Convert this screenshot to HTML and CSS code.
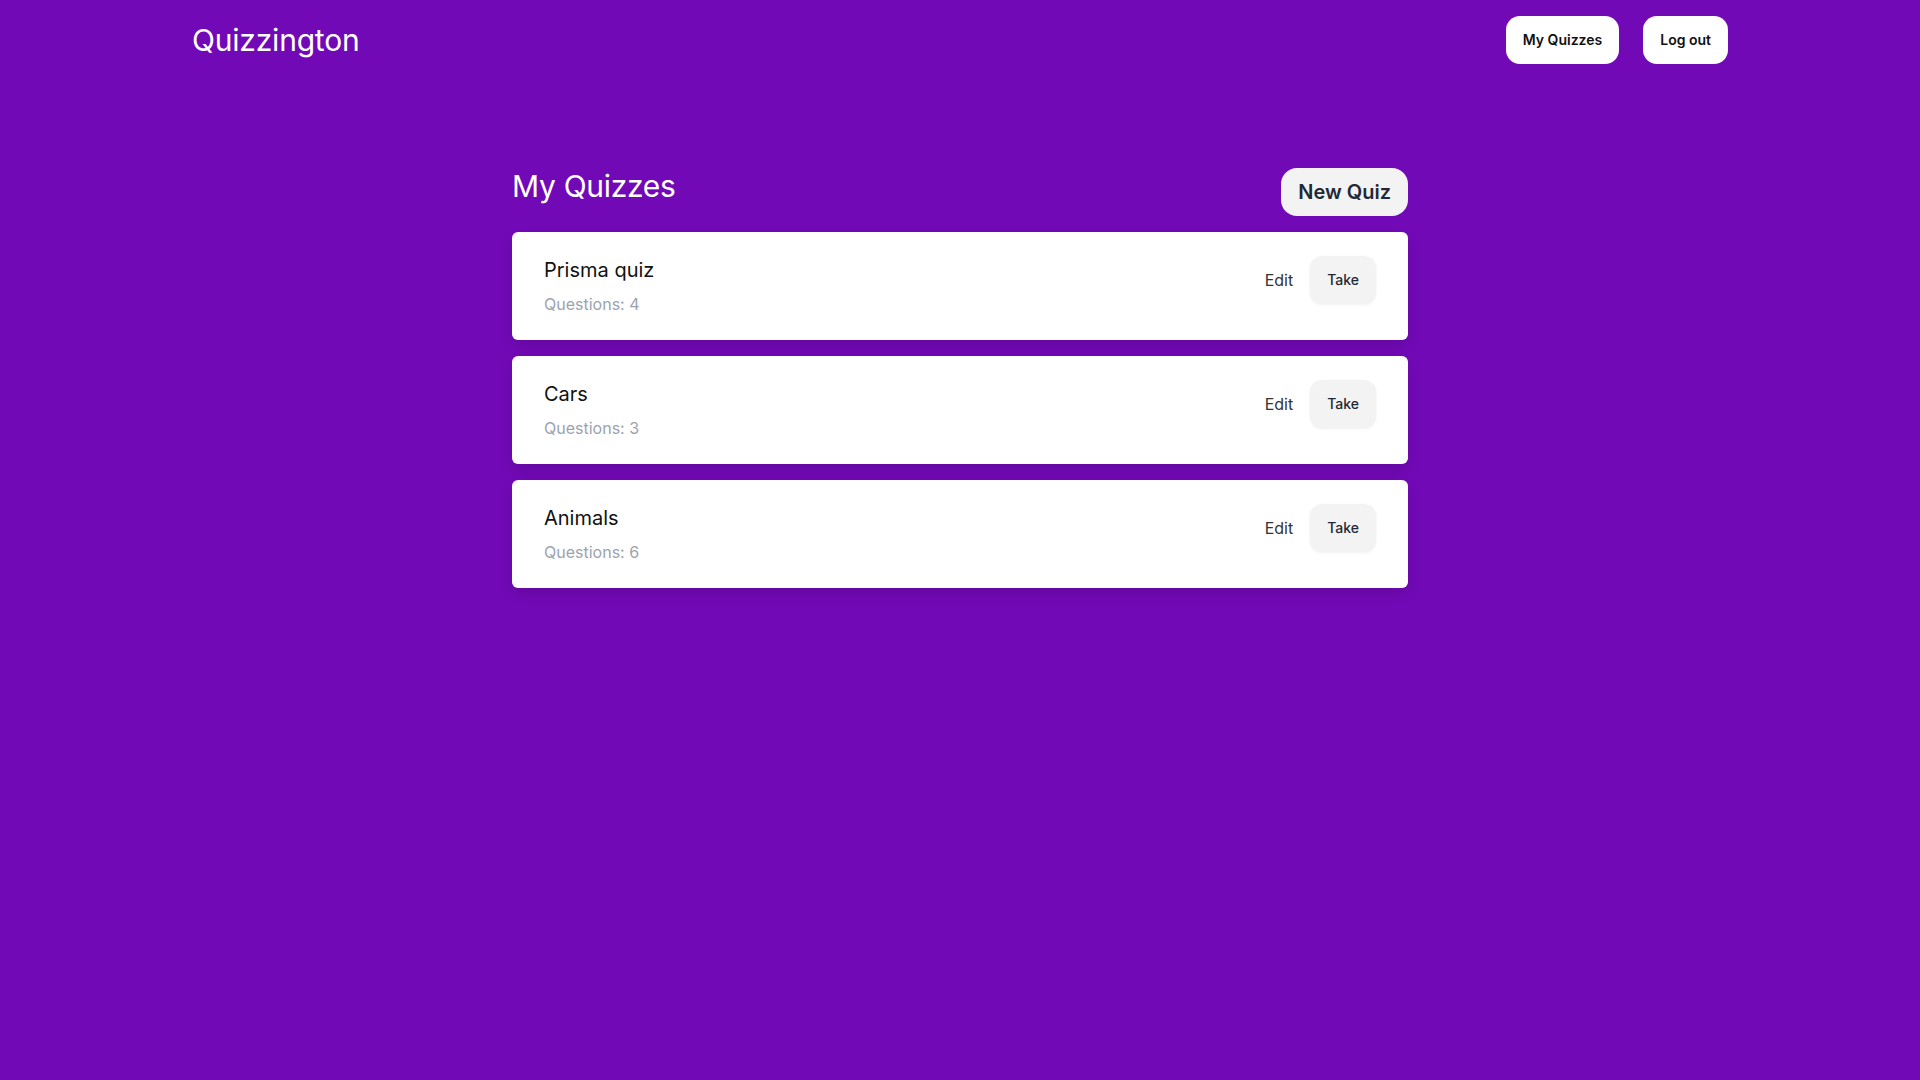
FILE: index.html
```html
<!DOCTYPE html>
<html lang="en">
<head>
    <meta charset="UTF-8">
    <meta name="viewport" content="width=device-width, initial-scale=1.0">
    <title>Quizzington - My Quizzes</title>
    <link rel="stylesheet" href="styles.css">
</head>
<body>
    <header class="topbar">
        <div class="topbar-inner">
            <a class="logo" href="#">Quizzington</a>
            <nav class="nav">
                <a class="nav-button" href="#">My Quizzes</a>
                <a class="nav-button" href="#">Log out</a>
            </nav>
        </div>
    </header>

    <main class="page">
        <div class="page-head">
            <h1>My Quizzes</h1>
            <button class="new-quiz">New Quiz</button>
        </div>

        <ul class="quiz-list">
            <li class="quiz-card">
                <div class="quiz-info">
                    <h2 class="quiz-title">Prisma quiz</h2>
                    <p class="quiz-count">Questions: 4</p>
                </div>
                <div class="quiz-actions">
                    <a class="edit-link" href="#">Edit</a>
                    <button class="take-button">Take</button>
                </div>
            </li>
            <li class="quiz-card">
                <div class="quiz-info">
                    <h2 class="quiz-title">Cars</h2>
                    <p class="quiz-count">Questions: 3</p>
                </div>
                <div class="quiz-actions">
                    <a class="edit-link" href="#">Edit</a>
                    <button class="take-button">Take</button>
                </div>
            </li>
            <li class="quiz-card">
                <div class="quiz-info">
                    <h2 class="quiz-title">Animals</h2>
                    <p class="quiz-count">Questions: 6</p>
                </div>
                <div class="quiz-actions">
                    <a class="edit-link" href="#">Edit</a>
                    <button class="take-button">Take</button>
                </div>
            </li>
        </ul>
    </main>
</body>
</html>
```

FILE: styles.css
```css
/* Base */
body {
    margin: 0;
    min-height: 100vh;
    background-color: #7209b7;
    font-family: 'Inter', 'Noto Sans', sans-serif;
    color: #111;
}

a {
    text-decoration: none;
}

/* Top bar */
.topbar-inner {
    max-width: 1536px;
    margin: 0 auto;
    padding: 16px 0;
    display: flex;
    justify-content: space-between;
    align-items: center;
}

.logo {
    color: #fff;
    font-size: 30px;
    line-height: 36px;
    letter-spacing: -0.2px;
}

.nav {
    display: flex;
    gap: 24px;
}

.nav-button {
    background-color: #fff;
    color: #111;
    font-size: 14px;
    line-height: 20px;
    font-weight: 600;
    padding: 14px 17px;
    border-radius: 14px;
}

/* Main list */
.page {
    max-width: 896px;
    margin: 0 auto;
    padding-top: 88px;
}

.page-head {
    display: flex;
    justify-content: space-between;
    align-items: flex-start;
    margin-bottom: 16px;
}

.page-head h1 {
    margin: 0;
    color: #fff;
    font-size: 30px;
    line-height: 36px;
    font-weight: 400;
    letter-spacing: -0.3px;
}

.new-quiz {
    font-family: inherit;
    font-size: 20px;
    line-height: 28px;
    font-weight: 600;
    color: #1f2937;
    background-color: #f3f3f3;
    border: none;
    border-radius: 16px;
    padding: 10px 17px;
    cursor: pointer;
}

.quiz-list {
    list-style: none;
    margin: 0;
    padding: 0;
    display: flex;
    flex-direction: column;
    gap: 16px;
}

.quiz-card {
    background-color: #fff;
    border-radius: 6px;
    padding: 24px 32px;
    display: flex;
    justify-content: space-between;
    align-items: flex-start;
    box-shadow: 0 6px 14px rgba(0, 0, 0, 0.12);
}

.quiz-title {
    margin: 0 0 8px;
    font-size: 20px;
    line-height: 28px;
    font-weight: 400;
}

.quiz-count {
    margin: 0;
    font-size: 16px;
    line-height: 24px;
    color: #9ca3af;
}

.quiz-actions {
    display: flex;
    align-items: center;
    gap: 17px;
}

.edit-link {
    color: #333;
    font-size: 16px;
}

.take-button {
    font-family: inherit;
    font-size: 14px;
    line-height: 20px;
    font-weight: 500;
    color: #1f2937;
    background-color: #f3f3f3;
    border: none;
    border-radius: 12px;
    padding: 14px 17px;
    box-shadow: 0 1px 3px rgba(0, 0, 0, 0.06);
    cursor: pointer;
}
```
